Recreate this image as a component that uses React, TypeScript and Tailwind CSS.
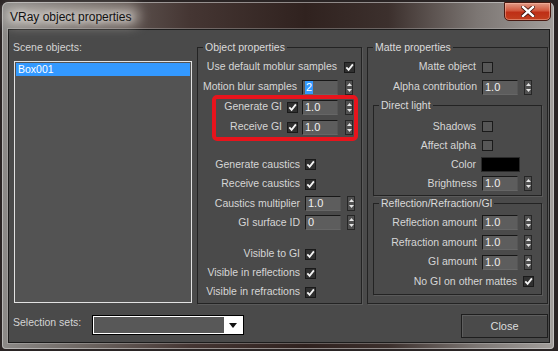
import React from 'react';

// small widgets of the 3ds Max dark dialog
function Check({ on = true }: { on?: boolean }) {
  return (
    <span
      className={
        on
          ? 'w-[11px] h-[11px] border border-[#1a1a1a] bg-[#303030] flex items-center justify-center shrink-0'
          : 'w-[11px] h-[11px] border border-[#1a1a1a] bg-[#575757] flex items-center justify-center shrink-0'
      }
    >
      {on && (
        <svg width="9" height="9" viewBox="0 0 9 9">
          <path d="M1.3 4.4 L3.6 6.9 L7.9 1.4" fill="none" stroke="#f4f4f4" strokeWidth="1.8" />
        </svg>
      )}
    </span>
  );
}

function Spin() {
  return (
    <span className="w-[8px] h-[15px] border border-[#262626] bg-[#505050] flex flex-col items-center justify-between py-[2px] shrink-0">
      <svg width="5" height="3" viewBox="0 0 5 3">
        <path d="M0 3 L2.5 0 L5 3Z" fill="#e4e4e4" />
      </svg>
      <svg width="5" height="3" viewBox="0 0 5 3">
        <path d="M0 0 L2.5 3 L5 0Z" fill="#e4e4e4" />
      </svg>
    </span>
  );
}

function Field({ value, selected }: { value: string; selected?: boolean }) {
  return (
    <span className="w-[36px] h-[15px] bg-[#5d5d5d] border-t border-l border-[#181818] border-r border-r-[#555] border-b border-b-[#666] text-[#f0f0f0] text-[11px] leading-[13px] pl-[2px] shrink-0 flex items-center">
      {selected ? <span className="bg-[#3399ff] text-white px-[1px]">{value}</span> : value}
    </span>
  );
}

function Row({
  label,
  ctl,
  h,
  pr,
  children,
}: {
  label: string;
  ctl: string;
  h: string;
  pr: string;
  children: React.ReactNode;
}) {
  return (
    <div className={`flex items-center ${h}`}>
      <span className={`flex-1 text-right whitespace-nowrap ${pr}`}>{label}</span>
      <div className={`flex items-center ${ctl}`}>{children}</div>
    </div>
  );
}

function Group({ title, className, children }: { title: string; className: string; children: React.ReactNode }) {
  return (
    <fieldset className={`border border-[#232323] [box-shadow:1px_1px_0_#5a5a5a] ${className}`}>
      <legend className="ml-[5px] px-[2px] leading-[13px] text-[#dadada]">{title}</legend>
      {children}
    </fieldset>
  );
}

export default function App() {
  return (
    <div className="w-[558px] h-[351px] bg-[#2a2424] pt-[2px] pl-[2px] font-['Liberation_Sans',Arial,sans-serif] text-[10.5px] text-[#d6d6d6] overflow-hidden">
      <div className="w-[552px] h-[347px] rounded-t-[6px] rounded-b-[4px] bg-[linear-gradient(90deg,#8c8a88_0%,#6f6864_14%,#453633_34%,#30221f_55%,#3c302d_70%,#7c7673_86%,#a29e9b_100%)] [box-shadow:inset_0_0_0_1px_rgba(220,220,220,0.55)] flex flex-col">
        {/* Title bar */}
        <div className="h-[27px] flex items-start relative">
          <span className="absolute left-[2px] top-[4px] w-[136px] h-[20px] rounded-full bg-[#d8d2cc]/60 blur-[6px]" />
          <span className="relative mt-[8px] ml-[8px] text-[12px] leading-[14px] text-[#111] [text-shadow:0_0_6px_#ffffff]">
            VRay object properties
          </span>
          <div className="ml-auto mr-[3px] w-[47px] h-[19px] rounded-b-[5px] border border-[#4a1a12] bg-[linear-gradient(180deg,#e29a86_0%,#d0573d_45%,#bf2f16_55%,#c2401f_100%)] [box-shadow:inset_0_0_0_1px_rgba(255,200,180,0.45)] flex items-center justify-center">
            <svg width="14" height="11" viewBox="0 0 14 11">
              <path d="M2 1 L12 10 M12 1 L2 10" stroke="#3a0e08" strokeWidth="4" strokeLinecap="square" />
              <path d="M2 1 L12 10 M12 1 L2 10" stroke="#ffffff" strokeWidth="2.4" strokeLinecap="square" />
            </svg>
          </div>
        </div>

        {/* Client area */}
        <div className="ml-[6px] w-[542px] h-[314px] bg-[#4a4a4a] border border-[#1c1c1c] [box-shadow:0_0_0_1px_rgba(200,200,200,0.35)] flex flex-col">
          <div className="flex items-start pt-[11px]">
            {/* Scene objects */}
            <div className="flex flex-col pl-[4px]">
              <span className="leading-[13px] text-[#d4d4d4]">Scene objects:</span>
              <div className="mt-[7px] ml-[1px] w-[178px] h-[242px] border border-[#e2e2e2] bg-[#535353] p-[1px]">
                <div className="h-[13px] bg-[#3399ff] text-white leading-[13px] pl-[2px]">Box001</div>
              </div>
            </div>

            {/* Object properties */}
            <Group title="Object properties" className="relative ml-[5px] w-[165px] h-[263px]">
              <div className="pt-[3px]">
                <Row label="Use default moblur samples" h="h-[20px]" pr="pr-[7px]" ctl="w-[17px]">
                  <Check />
                </Row>
                <Row label="Motion blur samples" h="h-[20px]" pr="pr-[5px]" ctl="w-[59px]">
                  <Field value="2" selected />
                  <span className="w-[7px]" />
                  <Spin />
                </Row>
                <Row label="Generate GI" h="h-[20px]" pr="pr-[5px]" ctl="w-[74px]">
                  <Check />
                  <span className="w-[4px]" />
                  <Field value="1.0" />
                  <span className="w-[7px]" />
                  <Spin />
                </Row>
                <Row label="Receive GI" h="h-[20px]" pr="pr-[5px]" ctl="w-[74px]">
                  <Check />
                  <span className="w-[4px]" />
                  <Field value="1.0" />
                  <span className="w-[7px]" />
                  <Spin />
                </Row>
              </div>
              {/* red highlight around the GI rows */}
              <span className="absolute left-[14px] top-[41px] w-[146px] h-[46px] border-[4px] border-[#e8141c] rounded-[5px] pointer-events-none" />
              <div className="mt-[18px]">
                <Row label="Generate caustics" h="h-[19.4px]" pr="pr-[5px]" ctl="w-[56px]">
                  <Check />
                </Row>
                <Row label="Receive caustics" h="h-[19.4px]" pr="pr-[5px]" ctl="w-[56px]">
                  <Check />
                </Row>
                <Row label="Caustics multiplier" h="h-[19.4px]" pr="pr-[5px]" ctl="w-[56px] gap-[6px]">
                  <Field value="1.0" />
                  <Spin />
                </Row>
                <Row label="GI surface ID" h="h-[19.4px]" pr="pr-[5px]" ctl="w-[56px] gap-[6px]">
                  <Field value="0" />
                  <Spin />
                </Row>
              </div>
              <div className="mt-[12px]">
                <Row label="Visible to GI" h="h-[19px]" pr="pr-[5px]" ctl="w-[56px]">
                  <Check />
                </Row>
                <Row label="Visible in reflections" h="h-[19px]" pr="pr-[5px]" ctl="w-[56px]">
                  <Check />
                </Row>
                <Row label="Visible in refractions" h="h-[19px]" pr="pr-[5px]" ctl="w-[56px]">
                  <Check />
                </Row>
              </div>
            </Group>

            {/* Matte properties */}
            <Group title="Matte properties" className="ml-[5px] w-[181px] h-[263px]">
              <div className="pt-[3px]">
                <Row label="Matte object" h="h-[20px]" pr="pr-[6px]" ctl="w-[65px]">
                  <Check on={false} />
                </Row>
                <Row label="Alpha contribution" h="h-[20px]" pr="pr-[5px]" ctl="w-[65px] gap-[6px]">
                  <Field value="1.0" />
                  <Spin />
                </Row>
              </div>
              <Group title="Direct light" className="mx-[5px] mt-[2px] h-[97px]">
                <div className="pt-[5px]">
                  <Row label="Shadows" h="h-[19px]" pr="pr-[6px]" ctl="w-[59px]">
                    <Check on={false} />
                  </Row>
                  <Row label="Affect alpha" h="h-[19px]" pr="pr-[6px]" ctl="w-[59px]">
                    <Check on={false} />
                  </Row>
                  <Row label="Color" h="h-[19px]" pr="pr-[6px]" ctl="w-[59px]">
                    <span className="w-[39px] h-[15px] bg-black border border-[#2a2a2a] -ml-[1px]" />
                  </Row>
                  <Row label="Brightness" h="h-[19px]" pr="pr-[5px]" ctl="w-[59px] gap-[6px]">
                    <Field value="1.0" />
                    <Spin />
                  </Row>
                </div>
              </Group>
              <Group title="Reflection/Refraction/GI" className="mx-[5px] mt-[1px] h-[98px]">
                <div className="pt-[3px]">
                  <Row label="Reflection amount" h="h-[19.7px]" pr="pr-[5px]" ctl="w-[59px] gap-[6px]">
                    <Field value="1.0" />
                    <Spin />
                  </Row>
                  <Row label="Refraction amount" h="h-[19.7px]" pr="pr-[5px]" ctl="w-[59px] gap-[6px]">
                    <Field value="1.0" />
                    <Spin />
                  </Row>
                  <Row label="GI amount" h="h-[19.7px]" pr="pr-[5px]" ctl="w-[59px] gap-[6px]">
                    <Field value="1.0" />
                    <Spin />
                  </Row>
                  <Row label="No GI on other mattes" h="h-[19.7px]" pr="pr-[6px]" ctl="w-[18px]">
                    <Check />
                  </Row>
                </div>
              </Group>
            </Group>
          </div>

          {/* Bottom row */}
          <div className="flex items-start mt-[10px] pl-[4px]">
            <span className="w-[79px] mt-[2px] leading-[13px] text-[#d4d4d4]">Selection sets:</span>
            <div className="mt-[1px] w-[152px] h-[20px] border border-black bg-white p-[1px] flex">
              <div className="flex-1 bg-[#585858]" />
              <div className="w-[18px] flex items-center justify-center">
                <svg width="8" height="5" viewBox="0 0 8 5">
                  <path d="M0 0 L8 0 L4 5Z" fill="#111" />
                </svg>
              </div>
            </div>
            <button className="ml-auto mr-[1px] w-[87px] h-[24px] border border-[#1e1e1e] bg-[#4a4a4a] [box-shadow:inset_1px_1px_0_#5e5e5e] text-[#dcdcdc] text-[11px]">
              Close
            </button>
          </div>
        </div>
      </div>
    </div>
  );
}
